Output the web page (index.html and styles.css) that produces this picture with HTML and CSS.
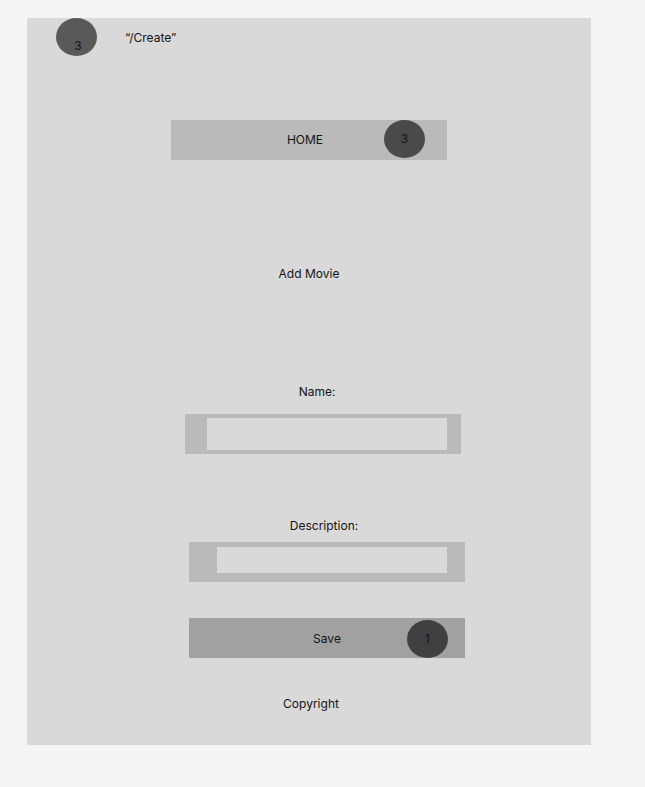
FILE: index.html
```html
<!DOCTYPE html>
<html>
<head>
<meta charset="utf-8">
<link rel="stylesheet" href="styles.css">
</head>
<body>
<div class="panel">
  <div class="header">
    <div class="avatar">3</div>
    <div class="route">“/Create”</div>
  </div>
  <div class="nav">
    <span class="nav-label">HOME</span>
    <span class="badge badge-nav">3</span>
  </div>
  <div class="title">Add Movie</div>
  <div class="label label-name">Name:</div>
  <div class="field field-name"><div class="field-inner"></div></div>
  <div class="label label-desc">Description:</div>
  <div class="field field-desc"><div class="field-inner"></div></div>
  <div class="save">
    <span>Save</span>
    <span class="badge badge-save">1</span>
  </div>
  <div class="footer">Copyright</div>
</div>
</body>
</html>
```

FILE: styles.css
```css
html, body {
  margin: 0;
  padding: 0;
  background: #f5f5f5;
}
body {
  font-family: Inter, "Noto Sans", sans-serif;
  font-size: 12px;
  line-height: 16px;
  color: #141414;
  width: 645px;
  height: 787px;
  overflow: hidden;
}
.panel {
  width: 564px;
  height: 727px;
  margin: 18px 0 0 27px;
  background: #d9d9d9;
  display: flex;
  flex-direction: column;
}
.header {
  display: flex;
  align-items: center;
  height: 38px;
  padding-left: 29px;
  gap: 28px;
}
.avatar {
  width: 41px;
  height: 38px;
  border-radius: 50%;
  background: #595959;
  box-sizing: border-box;
  padding: 20px 0 0 3px;
  text-align: center;
  flex-shrink: 0;
}
.route {
  padding-top: 2px;
}
.nav {
  position: relative;
  margin: 64px 0 0 144px;
  width: 276px;
  height: 40px;
  background: #bababa;
  display: flex;
  align-items: center;
  justify-content: center;
  padding: 0 8px 0 0;
  box-sizing: border-box;
}
.badge {
  position: absolute;
  width: 41px;
  height: 38px;
  border-radius: 50%;
  display: flex;
  align-items: center;
  justify-content: center;
}
.badge-nav {
  left: 213px;
  top: 0;
  background: #4a4a4a;
}
.title {
  margin-top: 105px;
  padding-top: 1px;
  text-align: center;
}
.label {
  text-align: center;
}
.label-name {
  margin-top: 101px;
  padding: 1px 0 0 16px;
}
.field {
  width: 276px;
  height: 40px;
  background: #bababa;
  box-sizing: border-box;
  display: flex;
}
.field-inner {
  flex: 1;
  background: #d9d9d9;
}
.field-name {
  margin: 14px 0 0 158px;
  padding: 4px 14px 4px 22px;
}
.label-desc {
  margin-top: 63px;
  padding: 1px 0 0 30px;
}
.field-desc {
  margin: 8px 0 0 162px;
  padding: 5px 18px 9px 28px;
}
.save {
  position: relative;
  margin: 36px 0 0 162px;
  width: 276px;
  height: 40px;
  background: #a1a1a1;
  display: flex;
  align-items: center;
  justify-content: center;
  padding-top: 2px;
  box-sizing: border-box;
}
.badge-save {
  left: 218px;
  top: 2px;
  background: #404040;
}
.footer {
  margin-top: 37px;
  text-align: center;
  padding: 1px 0 0 4px;
}
```
